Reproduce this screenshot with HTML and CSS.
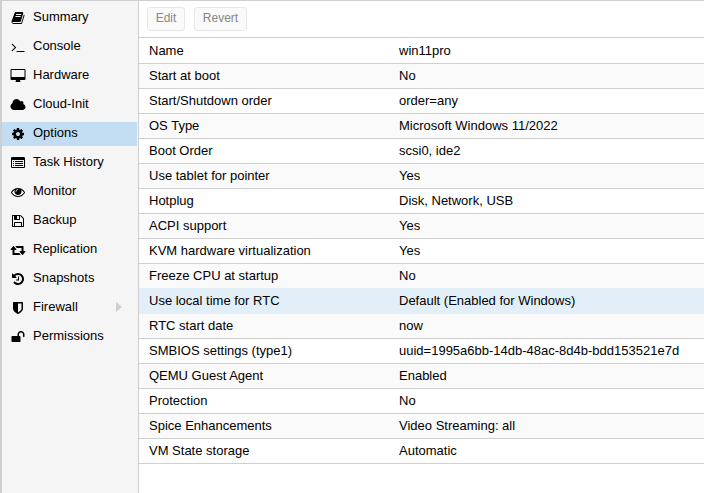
FILE: index.html
```html
<!DOCTYPE html>
<html lang="en">
<head>
<meta charset="utf-8">
<title>Options</title>
<link rel="stylesheet" href="styles.css">
</head>
<body>
<div class="app">
<nav class="nav">
<a class="item"><svg class="icon" viewBox="0 0 1792 1792"><path d="M1703 478q40 57 18 129l-275 906q-19 64-76.5 107.5t-122.5 43.5h-923q-77 0-148.5-53.5t-99.5-131.5q-24-67-2-127 0-4 3-27t4-37q1-8-3-21.5t-3-19.5q2-11 8-21t16.5-23.5 16.5-23.5q23-38 45-91.5t30-91.5q3-10 .5-30t-.5-28q3-11 17-28t17-23q21-36 42-92t25-90q1-9-2.5-32t.5-28q4-13 22-30.5t22-22.5q19-26 42.5-84.5t27.5-96.5q1-8-3-25.5t-2-26.5q2-8 9-18t18-23 17-21q8-12 16.5-30.5t15-35 16-36 19.5-32 26.5-23.5 36-11.5 47.5 5.5l-1 3q38-9 51-9h761q74 0 114 56t18 130l-274 906q-36 119-71.5 153.5t-128.5 34.5h-869q-27 0-38 15-11 16-1 43 24 70 144 70h923q29 0 56-15.5t35-41.5l300-987q7-22 5-57 38 15 59 43zm-1064 2q-4 13 2 22.5t20 9.5h608q13 0 25.5-9.5t16.5-22.5l21-64q4-13-2-22.5t-20-9.5h-608q-13 0-25.5 9.5t-16.5 22.5zm-83 256q-4 13 2 22.5t20 9.5h608q13 0 25.5-9.5t16.5-22.5l21-64q4-13-2-22.5t-20-9.5h-608q-13 0-25.5 9.5t-16.5 22.5z"/></svg><span>Summary</span></a>
<a class="item"><svg class="icon" viewBox="0 0 1792 1792"><path d="M649 983l-466 466q-10 10-23 10t-23-10l-50-50q-10-10-10-23t10-23l393-393-393-393q-10-10-10-23t10-23l50-50q10-10 23-10t23 10l466 466q10 10 10 23t-10 23zm1079 457v64q0 14-9 23t-23 9h-960q-14 0-23-9t-9-23v-64q0-14 9-23t23-9h960q14 0 23 9t9 23z"/></svg><span>Console</span></a>
<a class="item"><svg class="icon wide" viewBox="0 0 2048 1792"><path d="M1856 992v-832q0-13-9.5-22.5t-22.5-9.5h-1600q-13 0-22.5 9.5t-9.5 22.5v832q0 13 9.5 22.5t22.5 9.5h1600q13 0 22.5-9.5t9.5-22.5zm128-832v1088q0 66-47 113t-113 47h-544q0 37 16 77.5t32 71 16 43.5q0 26-19 45t-45 19h-512q-26 0-45-19t-19-45q0-14 16-44t32-70 16-78h-544q-66 0-113-47t-47-113v-1088q0-66 47-113t113-47h1600q66 0 113 47t47 113z"/></svg><span>Hardware</span></a>
<a class="item"><svg class="icon wide" viewBox="0 0 2048 1792"><path d="M1984 1152q0 159-112.5 271.5t-271.5 112.5h-1088q-185 0-316.5-131.5t-131.5-316.5q0-132 71-241.5t187-163.5q-2-28-2-43 0-212 150-362t362-150q158 0 286.5 88t187.5 230q70-62 166-62 106 0 181 75t75 181q0 75-41 138 129 30 213 134.5t84 239.5z"/></svg><span>Cloud-Init</span></a>
<a class="item selected"><svg class="icon" viewBox="0 0 1792 1792"><path d="M1152 896q0-106-75-181t-181-75-181 75-75 181 75 181 181 75 181-75 75-181zm512-109v222q0 12-8 23t-20 13l-185 28q-19 54-39 91 35 50 107 138 10 12 10 25t-9 23q-27 37-99 108t-94 71q-12 0-26-9l-138-108q-44 23-91 38-16 136-29 186-7 28-36 28h-222q-14 0-24.5-8.5t-11.5-21.5l-28-184q-49-16-90-37l-141 107q-10 9-25 9-14 0-25-11-126-114-165-168-7-10-7-23 0-12 8-23 15-21 51-66.5t54-70.5q-27-50-41-99l-183-27q-13-2-21-12.5t-8-23.5v-222q0-12 8-23t19-13l186-28q14-46 39-92-40-57-107-138-10-12-10-24 0-10 9-23 26-36 98.5-107.5t94.5-71.5q13 0 26 10l138 107q44-23 91-38 16-136 29-186 7-28 36-28h222q14 0 24.5 8.5t11.5 21.5l28 184q49 16 90 37l142-107q9-9 24-9 13 0 25 10 129 119 165 170 7 8 7 22 0 12-8 23-15 21-51 66.5t-54 70.5q26 50 41 98l183 28q13 2 21 12.5t8 23.5z"/></svg><span>Options</span></a>
<a class="item"><svg class="icon" viewBox="0 128 1792 1792"><path fill-rule="evenodd" d="M160 256h1472q66 0 113 47t47 113v1088q0 66-47 113t-113 47h-1472q-66 0-113-47t-47-113v-1088q0-66 47-113t113-47zM160 640q-32 0-32 32v832q0 32 32 32h1472q32 0 32-32v-832q0-32-32-32zM256 768h128v128h-128zM512 768h1024v128h-1024zM256 1024h128v128h-128zM512 1024h1024v128h-1024zM256 1280h128v128h-128zM512 1280h1024v128h-1024z"/></svg><span>Task History</span></a>
<a class="item"><svg class="icon" viewBox="0 0 1792 1792"><path d="M1664 960q-152-236-381-353 61 104 61 225 0 185-131.5 316.5t-316.5 131.5-316.5-131.5-131.5-316.5q0-121 61-225-229 117-381 353 133 205 333.5 326.5t434.5 121.5 434.5-121.5 333.5-326.5zm-720-384q0-20-14-34t-34-14q-125 0-214.5 89.5t-89.5 214.5q0 20 14 34t34 14 34-14 14-34q0-86 61-147t147-61q20 0 34-14t14-34zm848 384q0 34-20 69-140 230-376.5 368.5t-499.5 138.5-499.5-139-376.5-368q-20-35-20-69t20-69q140-229 376.5-368t499.5-139 499.5 139 376.5 368q20 35 20 69z"/></svg><span>Monitor</span></a>
<a class="item"><svg class="icon" viewBox="0 0 1792 1792"><path d="M512 1536h768v-384h-768v384zm896 0h128v-896q0-14-10-38.5t-20-34.5l-281-281q-10-10-34-20t-39-10v416q0 40-28 68t-68 28h-576q-40 0-68-28t-28-68v-416h-128v1280h128v-416q0-40 28-68t68-28h832q40 0 68 28t28 68v416zm-384-928v-320q0-13-9.5-22.5t-22.5-9.5h-192q-13 0-22.5 9.5t-9.5 22.5v320q0 13 9.5 22.5t22.5 9.5h192q13 0 22.5-9.5t9.5-22.5zm640 32v928q0 40-28 68t-68 28h-1344q-40 0-68-28t-28-68v-1344q0-40 28-68t68-28h928q40 0 88 20t76 48l280 280q28 28 48 76t20 88z"/></svg><span>Backup</span></a>
<a class="item"><svg class="icon wide" viewBox="-64 0 2048 1792"><path d="M1280 1504q0 13-9.5 22.5t-22.5 9.5h-960q-8 0-13.5-2t-9-7-5.5-8-3-11.5-1-11.5v-600h-192q-26 0-45-19t-19-45q0-24 15-41l320-384q19-22 49-22t49 22l320 384q15 17 15 41 0 26-19 45t-45 19h-192v384h576q16 0 25 11l160 192q7 10 7 21zm640-416q0 24-15 41l-320 384q-20 23-49 23t-49-23l-320-384q-15-17-15-41 0-26 19-45t45-19h192v-384h-576q-16 0-25-12l-160-192q-7-9-7-20 0-13 9.5-22.5t22.5-9.5h960q8 0 13.5 2t9 7 5.5 8 3 11.5 1 11.5v600h192q26 0 45 19t19 45z"/></svg><span>Replication</span></a>
<a class="item"><svg class="icon" viewBox="0 0 1792 1792"><path d="M1664 896q0 156-61 298t-164 245-245 164-298 61q-172 0-327-72.5t-264-204.5q-7-10-6.5-22.5t8.5-20.5l137-138q10-9 25-9 16 2 23 12 73 95 179 147t225 52q104 0 198.5-40.5t163.5-109.5 109.5-163.5 40.5-198.5-40.5-198.5-109.5-163.5-163.5-109.5-198.5-40.5q-98 0-188 35.5t-160 101.5l137 138q31 30 14 69-17 40-59 40h-448q-26 0-45-19t-19-45v-448q0-42 40-59 39-17 69 14l130 129q107-101 244.5-156.5t284.5-55.5q156 0 298 61t245 164 164 245 61 298zm-640-288v448q0 14-9 23t-23 9h-320q-14 0-23-9t-9-23v-64q0-14 9-23t23-9h224v-352q0-14 9-23t23-9h64q14 0 23 9t9 23z"/></svg><span>Snapshots</span></a>
<a class="item"><svg class="icon" viewBox="0 0 1792 1792"><path d="M1344 960v-640h-448v1137q119-63 213-137 235-184 235-360zm192-768v768q0 86-33.5 170.5t-83 150-118 127.5-126.5 103-121 77.5-89.5 49.5-42.5 20q-12 6-26 6t-26-6q-16-7-42.5-20t-89.5-49.5-121-77.5-126.5-103-118-127.5-83-150-33.5-170.5v-768q0-26 19-45t45-19h1152q26 0 45 19t19 45z"/></svg><span>Firewall</span><svg class="arrow" viewBox="0 0 6 10"><path d="M0 0L6 5L0 10z"/></svg></a>
<a class="item"><svg class="icon" viewBox="0 0 1792 1792"><path d="M1728 576v256q0 26-19 45t-45 19h-64q-26 0-45-19t-19-45v-256q0-106-75-181t-181-75-181 75-75 181v192h96q40 0 68 28t28 68v576q0 40-28 68t-68 28h-960q-40 0-68-28t-28-68v-576q0-40 28-68t68-28h672v-192q0-185 131.5-316.5t316.5-131.5 316.5 131.5 131.5 316.5z"/></svg><span>Permissions</span></a>
</nav>
<main class="panel">
<div class="toolbar"><button class="btn edit" disabled>Edit</button><button class="btn revert" disabled>Revert</button></div>
<div class="grid">
<div class="row"><span>Name</span><span>win11pro</span></div>
<div class="row"><span>Start at boot</span><span>No</span></div>
<div class="row"><span>Start/Shutdown order</span><span>order=any</span></div>
<div class="row"><span>OS Type</span><span>Microsoft Windows 11/2022</span></div>
<div class="row"><span>Boot Order</span><span>scsi0, ide2</span></div>
<div class="row"><span>Use tablet for pointer</span><span>Yes</span></div>
<div class="row"><span>Hotplug</span><span>Disk, Network, USB</span></div>
<div class="row"><span>ACPI support</span><span>Yes</span></div>
<div class="row"><span>KVM hardware virtualization</span><span>Yes</span></div>
<div class="row before"><span>Freeze CPU at startup</span><span>No</span></div>
<div class="row hover"><span>Use local time for RTC</span><span>Default (Enabled for Windows)</span></div>
<div class="row"><span>RTC start date</span><span>now</span></div>
<div class="row"><span>SMBIOS settings (type1)</span><span>uuid=1995a6bb-14db-48ac-8d4b-bdd153521e7d</span></div>
<div class="row"><span>QEMU Guest Agent</span><span>Enabled</span></div>
<div class="row"><span>Protection</span><span>No</span></div>
<div class="row"><span>Spice Enhancements</span><span>Video Streaming: all</span></div>
<div class="row"><span>VM State storage</span><span>Automatic</span></div>
</div>
</main>
</div>
</body>
</html>
```
FILE: styles.css
```css
* { box-sizing: border-box; }
body {
  margin: 0;
  font: 13px/24px "Liberation Sans", Arial, sans-serif;
  color: #000;
  background: #fff;
}
.app {
  display: flex;
  height: 493px;
  border-top: 1px solid #cfcfcf;
  border-left: 2px solid #cfcfcf;
  overflow: hidden;
}
.nav {
  display: flex;
  flex-direction: column;
  gap: 5px;
  width: 137px;
  padding: 5px 1px 0 0;
  flex: none;
  background: #f5f5f5;
  border-right: 1px solid #cfcfcf;
}
.item {
  display: flex;
  height: 24px;
  padding-left: 8px;
  line-height: 22px;
  white-space: nowrap;
}
.selected { background: #c2ddf2; }
.icon {
  width: 14px;
  height: 14px;
  margin: 5px 8px 0 1px;
  flex: none;
}
.wide { width: 16px; margin: 5px 7px 0 0; }
.arrow {
  width: 6px;
  height: 10px;
  margin: 6px 15px 0 auto;
  fill: #cfcfcf;
}
.panel { flex: 1; min-width: 0; }
.toolbar {
  display: flex;
  gap: 9px;
  height: 37px;
  padding: 6px 8px 0;
  border-bottom: 1px solid #cfcfcf;
}
.btn {
  height: 24px;
  padding: 0 0 2px;
  font: 12px/20px "Liberation Sans", Arial, sans-serif;
  color: #868686;
  background: #fafafa;
  border: 1px solid #e7e7e7;
  border-radius: 3px;
}
.edit { width: 38px; }
.revert { width: 53px; }
.row {
  display: flex;
  height: 25px;
  padding-left: 10px;
  border-bottom: 1px solid #cfcfcf;
  white-space: nowrap;
}
.row:first-child { height: 26px; line-height: 25px; }
.row:nth-child(even) { background: #fafafa; }
.row span:first-child { width: 250px; }
.row.before { border-bottom-color: #e2eff8; }
.row.hover { background: #e2eff8; border-bottom-color: #e2eff8; }
```
